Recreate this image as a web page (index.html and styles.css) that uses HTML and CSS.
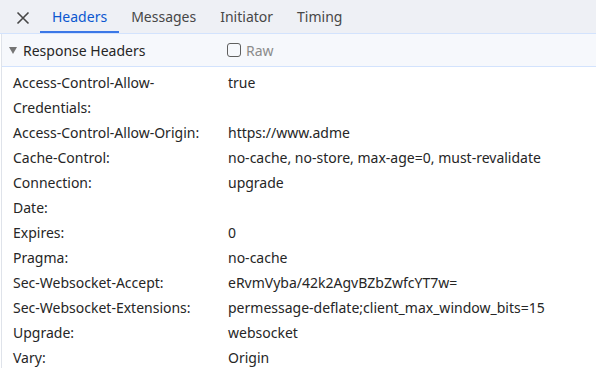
FILE: index.html
```html
<!DOCTYPE html>
<html lang="en">

<head>
    <meta charset="UTF-8">
    <meta name="viewport" content="width=device-width, initial-scale=1.0">
    <title>Headers</title>
    <link rel="stylesheet" href="styles.css">
</head>

<body>
    <div class="tabbar">
        <span class="close">
            <svg width="14" height="14" viewBox="0 0 14 14">
                <path d="M1.5 1.5 L12.5 12.5 M12.5 1.5 L1.5 12.5" stroke="#474747" stroke-width="1.6" fill="none" />
            </svg>
        </span>
        <ul class="tabs">
            <li class="active">Headers</li>
            <li>Messages</li>
            <li>Initiator</li>
            <li>Timing</li>
        </ul>
    </div>

    <div class="panel">
        <div class="section-title">
            <span class="arrow"></span>
            <span class="title-text">Response Headers</span>
            <label class="raw">
                <span class="box"></span>
                Raw
            </label>
        </div>

        <div class="header-list">
            <div class="name">Access-Control-Allow-Credentials:</div>
            <div class="value">true</div>
            <div class="name">Access-Control-Allow-Origin:</div>
            <div class="value">https://www.adme</div>
            <div class="name">Cache-Control:</div>
            <div class="value">no-cache, no-store, max-age=0, must-revalidate</div>
            <div class="name">Connection:</div>
            <div class="value">upgrade</div>
            <div class="name">Date:</div>
            <div class="value"></div>
            <div class="name">Expires:</div>
            <div class="value">0</div>
            <div class="name">Pragma:</div>
            <div class="value">no-cache</div>
            <div class="name">Sec-Websocket-Accept:</div>
            <div class="value">eRvmVyba/42k2AgvBZbZwfcYT7w=</div>
            <div class="name">Sec-Websocket-Extensions:</div>
            <div class="value">permessage-deflate;client_max_window_bits=15</div>
            <div class="name">Upgrade:</div>
            <div class="value">websocket</div>
            <div class="name">Vary:</div>
            <div class="value">Origin</div>
        </div>
    </div>
</body>

</html>
```

FILE: styles.css
```css
* {
    padding: 0;
    margin: 0;
    box-sizing: border-box;
}

body {
    background-color: #ffffff;
    font-family: "Noto Sans", "Open Sans", sans-serif;
    font-size: 14px;
    color: #262626;
    overflow: hidden;
}

.tabbar {
    display: flex;
    align-items: stretch;
    height: 34px;
    background-color: #eef0f5;
    border-bottom: 1px solid #d3e3fd;
}

.close {
    display: flex;
    align-items: center;
    justify-content: center;
    width: 40px;
    padding-left: 6px;
    padding-top: 2px;
}

.tabs {
    list-style: none;
    display: flex;
}

.tabs li {
    display: flex;
    align-items: center;
    padding: 2px 12px 0;
    color: #474747;
    border-bottom: 2px solid transparent;
}

.tabs li.active {
    color: #0b57d0;
    border-bottom-color: #3b78e7;
}

.panel {
    border-left: 1px solid #dfe3ea;
    margin-left: 1px;
}

.section-title {
    display: flex;
    align-items: center;
    height: 33px;
    background-color: #f6f8fc;
    border-bottom: 1px solid #d3e3fd;
    padding-left: 7px;
}

.arrow {
    width: 0;
    height: 0;
    border-left: 4px solid transparent;
    border-right: 4px solid transparent;
    border-top: 7px solid #757575;
    margin-right: 6px;
}

.title-text {
    width: 204px;
}

.raw {
    display: flex;
    align-items: center;
    color: #8b8b8b;
}

.box {
    width: 14px;
    height: 14px;
    border: 1.5px solid #5f5f5f;
    border-radius: 3px;
    margin-right: 5px;
}

.header-list {
    display: grid;
    grid-template-columns: 205px 1fr;
    column-gap: 10px;
    padding: 3px 0 0 11px;
    line-height: 25px;
}

.value {
    white-space: nowrap;
}
```
